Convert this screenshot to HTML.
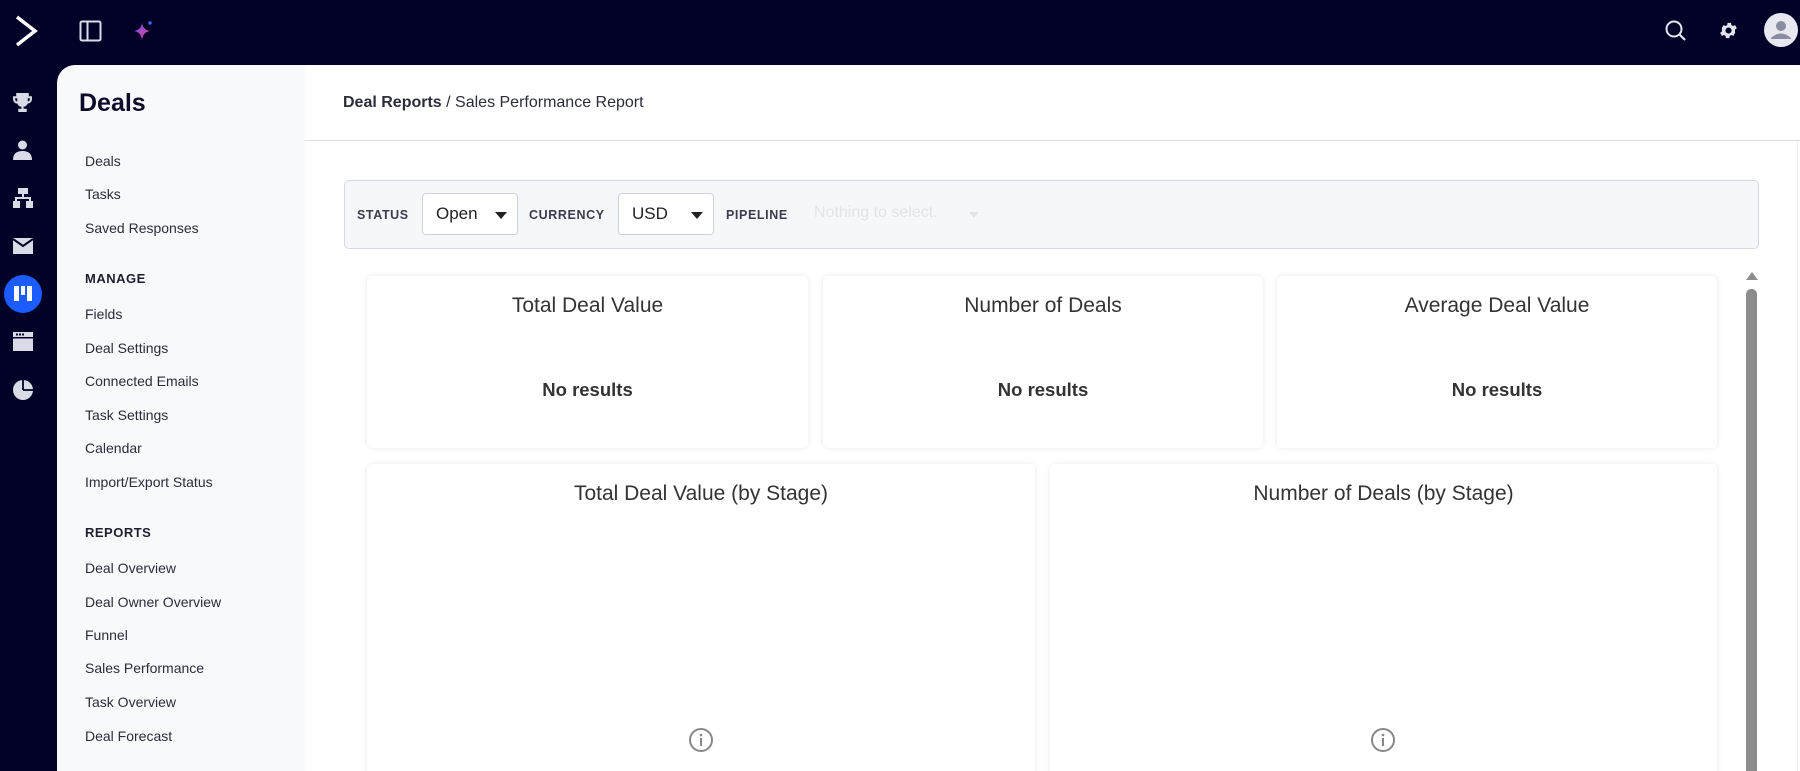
<!DOCTYPE html>
<html><head><meta charset="utf-8"><style>
*{box-sizing:border-box;margin:0;padding:0}
html{width:1800px;height:771px;overflow:hidden}
body{width:1800px;height:771px;overflow:hidden;background:#020229;font-family:"Liberation Sans",sans-serif;position:relative}
.abs{position:absolute}
#side{left:57px;top:65px;width:248px;height:706px;background:#f8f9fa;border-top-left-radius:18px}
#side h1{position:absolute;left:22px;top:24px;font-size:25px;font-weight:bold;color:#0b0c2a}
#side .it{position:absolute;left:28px;font-size:14px;color:#2a2d3a}
#side .hd{position:absolute;left:28px;font-size:13px;font-weight:bold;color:#1e2030;letter-spacing:.5px}
#main{left:305px;top:65px;width:1495px;height:706px;background:#fff;overflow:hidden}
.hdr{position:absolute;left:0;top:0;width:1495px;height:76px;border-bottom:1px solid #dcdde2}
.crumb{position:absolute;left:38px;top:29px;font-size:16px;color:#2b2d3a}
.filter{position:absolute;left:39px;top:115px;width:1415px;height:69px;background:#f6f7fb;border:1px solid #d6d9e3;border-radius:5px}
.lbl{position:absolute;top:27px;font-size:12.5px;font-weight:bold;color:#3a3d4c;letter-spacing:.6px}
.sel{position:absolute;top:12px;height:42px;background:#fff;border:1px solid #cfd2db;border-radius:4px;font-size:17px;color:#222;padding:10px 13px}
.sel:after{content:"";position:absolute;right:10px;top:18px;border-left:6px solid transparent;border-right:6px solid transparent;border-top:7px solid #222}
.card{position:absolute;background:#fff;border-radius:5px;box-shadow:0 0 6px rgba(0,0,0,.09)}
.card .t{position:absolute;left:0;right:0;top:18px;text-align:center;font-size:21px;color:#333}
.card .n{position:absolute;left:0;right:0;top:103px;text-align:center;font-size:18.5px;font-weight:bold;color:#333}
</style></head><body>
<svg class="abs" style="left:13px;top:14px" width="26" height="34" viewBox="0 0 26 34"><path d="M4 3 L22 17 L4 31" fill="none" stroke="#fff" stroke-width="3.5"/></svg>
<svg class="abs" style="left:79px;top:20px" width="23" height="22" viewBox="0 0 23 22"><rect x="1.5" y="1.5" width="20" height="19" rx="1.5" fill="none" stroke="#d9dbe6" stroke-width="2"/><line x1="8.5" y1="2" x2="8.5" y2="20" stroke="#d9dbe6" stroke-width="2"/></svg>
<svg class="abs" style="left:132px;top:20px" width="22" height="22" viewBox="0 0 22 22"><defs><linearGradient id="g" x1="0" y1="0" x2="1" y2="1"><stop offset="0" stop-color="#6c4cf5"/><stop offset="1" stop-color="#e74a8a"/></linearGradient></defs><path d="M10 3 Q11 10 18 11 Q11 12 10 20 Q9 12 2 11 Q9 10 10 3Z" fill="url(#g)"/><circle cx="18" cy="3" r="1.7" fill="#3b6cf5"/></svg>
<svg class="abs" style="left:1664px;top:19px" width="24" height="24" viewBox="0 0 24 24"><circle cx="10" cy="10" r="7.5" fill="none" stroke="#e3e4ec" stroke-width="2"/><line x1="15.5" y1="15.5" x2="21" y2="21" stroke="#e3e4ec" stroke-width="2.2"/></svg>
<svg class="abs" style="left:1718px;top:20px" width="21" height="21" viewBox="0 0 24 24"><path fill="#e3e4ec" d="M19.4 13c.04-.33.06-.66.06-1s-.02-.67-.06-1l2.1-1.650-2-3.46-2.48 1a7.6 7.6 0 0 0-1.72-1l-.38-2.64h-4l-.38 2.64c-.62.26-1.2.6-1.72 1l-2.48-1-2 3.46L4.54 11c-.04.33-.06.66-.06 1s.02.67.06 1l-2.1 1.65 2 3.46 2.48-1c.52.4 1.1.74 1.72 1l.38 2.64h4l.38-2.64c.62-.26 1.2-.6 1.72-1l2.48 1 2-3.46L19.4 13zM12 15.5a3.5 3.5 0 1 1 0-7 3.5 3.5 0 0 1 0 7z"/></svg>
<svg class="abs" style="left:1764px;top:13px" width="34" height="34" viewBox="0 0 34 34"><circle cx="17" cy="17" r="17" fill="#e7e8f0"/><circle cx="17" cy="13" r="5" fill="#8a8da0"/><path d="M7 25 Q17 16 27 25 L27 26 L7 26Z" fill="#8a8da0"/></svg>
<svg class="abs" style="left:12px;top:92px" width="21" height="21" viewBox="0 0 20 20"><path fill="#d9dbe6" d="M4 1h12v3h3v3c0 2-2 4-4 4 -1 2-2 3-4 3v2h3v3H6v-3h3v-2c-2 0-3-1-4-3-2 0-4-2-4-4V4h3V1zm-1 5v1c0 1 1 2 2 2V6H3zm14 0h-2v3c1 0 2-1 2-2V6z"/></svg>
<svg class="abs" style="left:13px;top:140px" width="19" height="20" viewBox="0 0 19 20"><circle cx="9.5" cy="5" r="4.5" fill="#d9dbe6"/><path d="M0 20 Q0 11 9.5 11 Q19 11 19 20Z" fill="#d9dbe6"/></svg>
<svg class="abs" style="left:13px;top:188px" width="20" height="20" viewBox="0 0 20 20" fill="#d9dbe6"><rect x="5" y="0" width="10" height="6"/><rect x="9" y="6" width="2" height="4"/><rect x="2" y="9" width="16" height="2"/><rect x="2" y="9" width="2" height="5"/><rect x="16" y="9" width="2" height="5"/><rect x="0" y="13" width="7" height="7"/><rect x="13" y="13" width="7" height="7"/></svg>
<svg class="abs" style="left:13px;top:238px" width="20" height="16" viewBox="0 0 20 16"><rect width="20" height="16" fill="#d9dbe6"/><path d="M0 1 L10 8 L20 1" fill="none" stroke="#020229" stroke-width="2"/></svg>
<svg class="abs" style="left:4px;top:275px" width="38" height="38" viewBox="0 0 38 38"><circle cx="19" cy="19" r="19" fill="#1a5cff"/><rect x="10" y="11" width="5" height="15" fill="#fff"/><rect x="17" y="11" width="4" height="9" fill="#fff"/><rect x="23" y="11" width="5" height="15" fill="#fff"/></svg>
<svg class="abs" style="left:13px;top:332px" width="20" height="19" viewBox="0 0 20 19"><rect width="20" height="19" fill="#d9dbe6"/><rect x="0" y="5" width="20" height="1.5" fill="#020229"/><rect x="3" y="1.5" width="2" height="2" fill="#020229"/><rect x="6" y="1.5" width="2" height="2" fill="#020229"/><rect x="9" y="1.5" width="2" height="2" fill="#020229"/></svg>
<svg class="abs" style="left:13px;top:380px" width="20" height="20" viewBox="0 0 20 20"><circle cx="10" cy="10" r="10" fill="#d9dbe6"/><path d="M10 10 V0 M10 10 H20" stroke="#020229" stroke-width="1.8"/></svg>
<div id="side" class="abs">
<h1>Deals</h1>
<div class="it" style="top:88px">Deals</div>
<div class="it" style="top:121px">Tasks</div>
<div class="it" style="top:155px">Saved Responses</div>
<div class="hd" style="top:206px">MANAGE</div>
<div class="it" style="top:241px">Fields</div>
<div class="it" style="top:275px">Deal Settings</div>
<div class="it" style="top:308px">Connected Emails</div>
<div class="it" style="top:342px">Task Settings</div>
<div class="it" style="top:375px">Calendar</div>
<div class="it" style="top:409px">Import/Export Status</div>
<div class="hd" style="top:460px">REPORTS</div>
<div class="it" style="top:495px">Deal Overview</div>
<div class="it" style="top:529px">Deal Owner Overview</div>
<div class="it" style="top:562px">Funnel</div>
<div class="it" style="top:595px">Sales Performance</div>
<div class="it" style="top:629px">Task Overview</div>
<div class="it" style="top:663px">Deal Forecast</div>
</div>
<div id="main" class="abs">
<div class="hdr"><div class="crumb"><b>Deal Reports</b> / Sales Performance Report</div></div>
<div class="filter">
<div class="lbl" style="left:12px">STATUS</div>
<div class="sel" style="left:77px;width:96px">Open</div>
<div class="lbl" style="left:184px">CURRENCY</div>
<div class="sel" style="left:273px;width:96px">USD</div>
<div class="lbl" style="left:381px">PIPELINE</div>
<div class="abs" style="left:469px;top:23px;font-size:16px;color:#e3e4e8">Nothing to select.</div>
<div class="abs" style="left:624px;top:31px;border-left:5px solid transparent;border-right:5px solid transparent;border-top:6px solid #e3e4e8"></div>
</div>
<div class="card" style="left:62px;top:211px;width:441px;height:172px"><div class="t">Total Deal Value</div><div class="n">No results</div></div>
<div class="card" style="left:518px;top:211px;width:440px;height:172px"><div class="t">Number of Deals</div><div class="n">No results</div></div>
<div class="card" style="left:972px;top:211px;width:440px;height:172px"><div class="t">Average Deal Value</div><div class="n">No results</div></div>
<div class="card" style="left:62px;top:399px;width:668px;height:320px"><div class="t">Total Deal Value (by Stage)</div>
<svg class="abs" style="left:321px;top:263px" width="26" height="26" viewBox="0 0 26 26"><circle cx="13" cy="13" r="11" fill="none" stroke="#888" stroke-width="2"/><rect x="12" y="11" width="2" height="8" fill="#888"/><circle cx="13" cy="8" r="1.3" fill="#888"/></svg></div>
<div class="card" style="left:745px;top:399px;width:667px;height:320px"><div class="t">Number of Deals (by Stage)</div>
<svg class="abs" style="left:320px;top:263px" width="26" height="26" viewBox="0 0 26 26"><circle cx="13" cy="13" r="11" fill="none" stroke="#888" stroke-width="2"/><rect x="12" y="11" width="2" height="8" fill="#888"/><circle cx="13" cy="8" r="1.3" fill="#888"/></svg></div>
<div class="abs" style="left:1441px;top:207px;border-left:6px solid transparent;border-right:6px solid transparent;border-bottom:8px solid #8c8c8c"></div>
<div class="abs" style="left:1441px;top:224px;width:11px;height:500px;background:#8c8c8c;border-radius:5px"></div>
<div class="abs" style="left:1492px;top:76px;width:1px;height:630px;background:#eceef2"></div>
</div>
</body></html>
